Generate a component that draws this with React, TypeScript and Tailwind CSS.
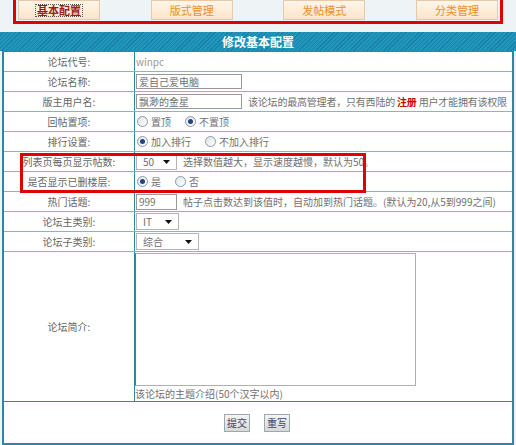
import React from 'react'

const tabs = ['基本配置', '版式管理', '发帖模式', '分类管理']

function Radio({ checked }: { checked?: boolean }) {
  return (
    <span className="inline-flex h-[11px] w-[11px] items-center justify-center rounded-full border border-[#8a9aa8] bg-gradient-to-br from-[#dfe4ea] to-white">
      {checked && <span className="h-[5px] w-[5px] rounded-full bg-[#21467e]" />}
    </span>
  )
}

function Select({ value, width }: { value: string; width: string }) {
  return (
    <div className={`flex h-[17px] items-center justify-between border border-[#b5b5b5] bg-white pl-[6px] pr-[6px] ${width}`}>
      <span>{value}</span>
      <svg width="7" height="4" viewBox="0 0 7 4">
        <path d="M0 0h7L3.5 4z" fill="#111" />
      </svg>
    </div>
  )
}

function Row({ label, children, className = 'h-[20px]' }: { label: string; children?: React.ReactNode; className?: string }) {
  return (
    <div className={`flex border-b border-[#8fb3ba] ${className}`}>
      <div className="flex w-[131px] shrink-0 items-center justify-center border-r border-[#2f86a0] text-[#666]">{label}</div>
      <div className="flex min-w-0 flex-1 items-center gap-[6px] whitespace-nowrap pl-[1px] text-[#707070]">{children}</div>
    </div>
  )
}

export default function App() {
  return (
    <div
      className="relative h-[445px] w-[516px] overflow-hidden bg-[#eef3f6] text-[10px] leading-none"
      style={{ fontFamily: '"Noto Sans CJK SC", "Liberation Sans", sans-serif' }}
    >
      <div className="mx-[13px] flex h-[24px] justify-between border-[3px] border-t-0 border-[#e00000] px-[2px]">
        {tabs.map((t, i) => (
          <div
            key={t}
            className="flex h-[20px] w-[82px] items-center justify-center border border-[#e6c9a8] bg-gradient-to-b from-[#fff6ea] to-[#fbe3c8] text-[11px]"
          >
            {i === 0 ? (
              <span className="border border-dotted border-[#555] px-[1px] font-bold text-[#a0191c]">{t}</span>
            ) : (
              <span className="text-[#e8902e]">{t}</span>
            )}
          </div>
        ))}
      </div>

      <div className="mt-[8px] flex h-[19px] items-center justify-center bg-[repeating-linear-gradient(135deg,#2196bd_0px,#2196bd_2px,#1a82a8_2px,#1a82a8_3px)] text-[12px] font-bold text-white">
        修改基本配置
      </div>

      <div className="relative mx-[2px] border-x-2 border-t border-b-2 border-[#2f86a0] bg-white">
        <Row label="论坛代号:">
          <span className="text-[#999]">winpc</span>
        </Row>
        <Row label="论坛名称:">
          <div className="flex h-[15px] w-[106px] items-center border border-[#999] pl-[2px]">爱自己爱电脑</div>
        </Row>
        <Row label="版主用户名:">
          <div className="flex h-[15px] w-[106px] shrink-0 items-center border border-[#999] pl-[2px]">飘渺的金星</div>
          <span className="tracking-[-0.2px]">
            该论坛的最高管理者，只有西陆的 <span className="font-bold text-[#cc0000]">注册</span> 用户才能拥有该权限
          </span>
        </Row>
        <Row label="回帖置项:">
          <span className="ml-[1px] flex items-center gap-[3px]">
            <Radio />置顶
          </span>
          <span className="ml-[8px] flex items-center gap-[3px]">
            <Radio checked />不置顶
          </span>
        </Row>
        <Row label="排行设置:">
          <span className="ml-[1px] flex items-center gap-[3px]">
            <Radio checked />加入排行
          </span>
          <span className="ml-[8px] flex items-center gap-[3px]">
            <Radio />不加入排行
          </span>
        </Row>
        <Row label="列表页每页显示帖数:">
          <Select value="50" width="w-[41px]" />
          <span>选择数值越大，显示速度越慢，默认为50。</span>
        </Row>
        <Row label="是否显示已删楼层:">
          <span className="ml-[1px] flex items-center gap-[3px]">
            <Radio checked />是
          </span>
          <span className="ml-[8px] flex items-center gap-[3px]">
            <Radio />否
          </span>
        </Row>
        <Row label="热门话题:">
          <div className="flex h-[16px] w-[41px] items-center border border-[#999] pl-[2px]">999</div>
          <span>帖子点击数达到该值时，自动加到热门话题。(默认为20,从5到999之间)</span>
        </Row>
        <Row label="论坛主类别:">
          <Select value="IT" width="w-[43px]" />
        </Row>
        <Row label="论坛子类别:">
          <Select value="综合" width="w-[63px]" />
        </Row>
        <div className="flex h-[150px] border-b border-[#2f86a0]">
          <div className="flex w-[131px] shrink-0 items-center justify-center border-r border-[#2f86a0] text-[#666]">论坛简介:</div>
          <div className="flex flex-col pt-[1px] text-[#707070]">
            <div className="h-[133px] w-[281px] border border-[#b0b0b0] border-l-[#2f86a0]" />
            <span className="mt-[3px]">该论坛的主题介绍(50个汉字以内)</span>
          </div>
        </div>
        <div className="flex h-[41px] items-center justify-center gap-[14px] pr-[2px]">
          <button className="h-[18px] w-[26px] border border-[#9aa] bg-gradient-to-b from-[#f4f4f4] to-[#d8d8d8] text-[10px] text-[#446]">提交</button>
          <button className="h-[18px] w-[26px] border border-[#9aa] bg-gradient-to-b from-[#f4f4f4] to-[#d8d8d8] text-[10px] text-[#446]">重写</button>
        </div>

        <div className="pointer-events-none absolute left-[16px] top-[101px] h-[40px] w-[346px] border-[3px] border-[#e00000]" />
      </div>
    </div>
  )
}
